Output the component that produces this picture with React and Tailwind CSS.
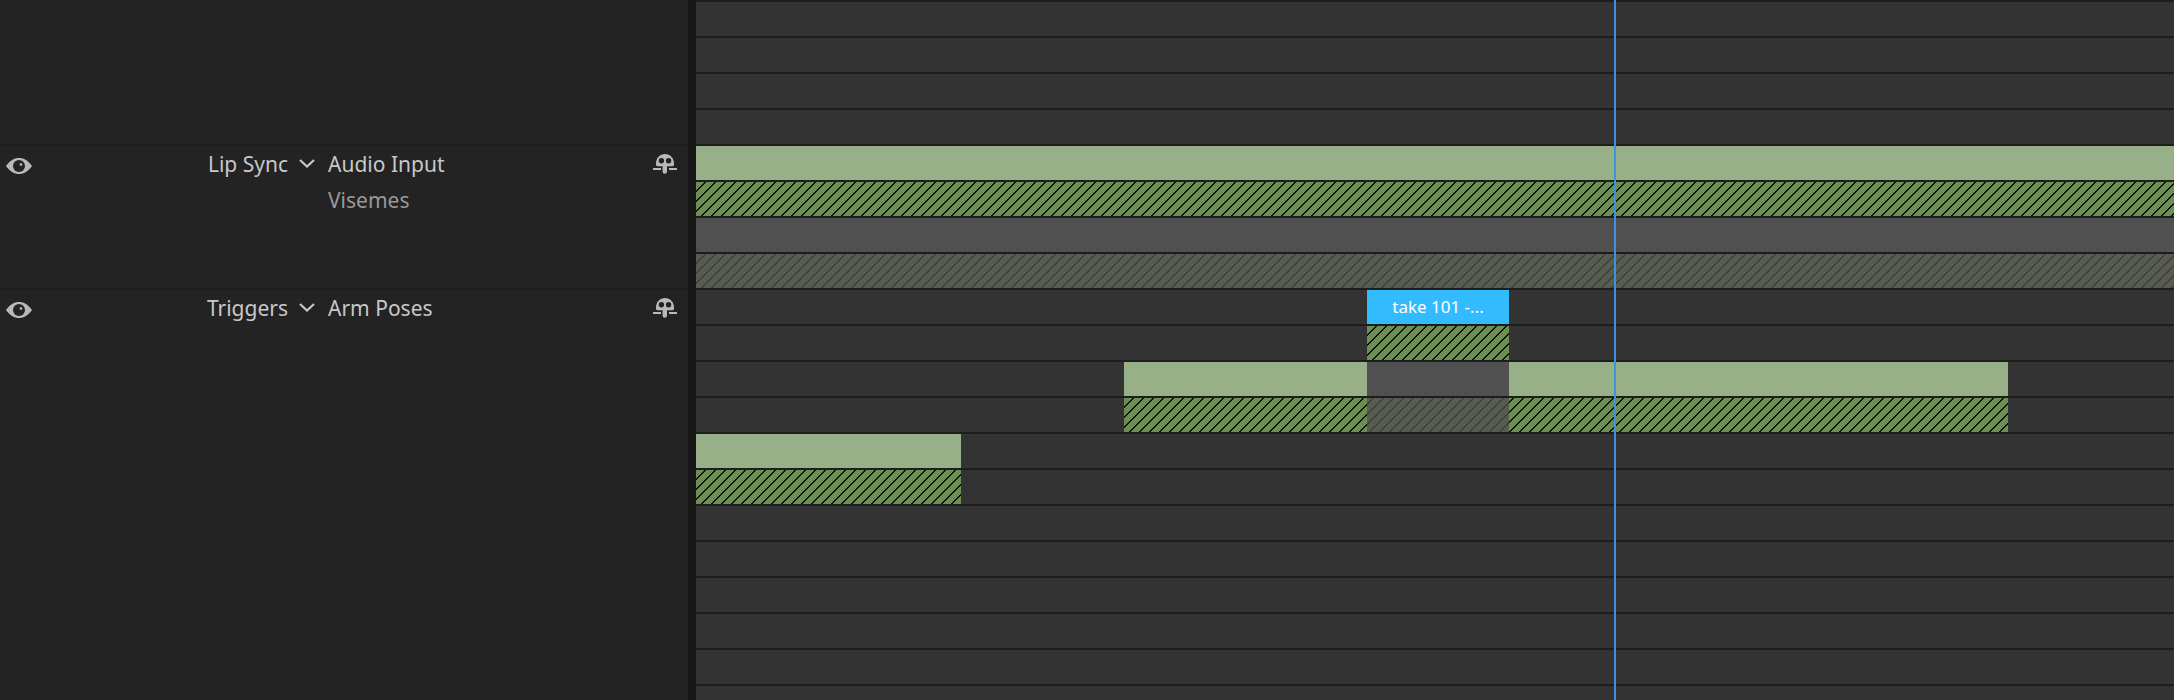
const ROW_COUNT = 20;

// Fill styles for each kind of clip
const clipStyles = {
  take: "bg-[#97b088]",
  blend:
    "bg-[#6b8f52] bg-[image:linear-gradient(135deg,#0d120a_5%,transparent_5%,transparent_45%,#0d120a_45%,#0d120a_55%,transparent_55%,transparent_95%,#0d120a_95%)] bg-size-[10px_10px]",
  muted: "bg-[#505050]",
  mutedBlend:
    "bg-[#585c50] bg-[image:linear-gradient(135deg,#3e413a_5%,transparent_5%,transparent_45%,#3e413a_45%,#3e413a_55%,transparent_55%,transparent_95%,#3e413a_95%)] bg-size-[10px_10px]",
  selected: "bg-[#33bbff]",
};

// row index -> clips in order, "gap" is the empty time before the clip,
// "phase" keeps the hatching continuous across neighbours
const clips = {
  4: [{ type: "take" }],
  5: [{ type: "blend" }],
  6: [{ type: "muted" }],
  7: [{ type: "mutedBlend" }],
  8: [{ type: "selected", gap: 671, length: 142, label: "take 101 -..." }],
  9: [{ type: "blend", gap: 671, length: 142 }],
  10: [
    { type: "take", gap: 428, length: 243 },
    { type: "muted", length: 142 },
    { type: "take", length: 499 },
  ],
  11: [
    { type: "blend", gap: 428, length: 243 },
    { type: "mutedBlend", length: 142, phase: 243 },
    { type: "blend", length: 499, phase: 385 },
  ],
  12: [{ type: "take", length: 265 }],
  13: [{ type: "blend", length: 265 }],
};

const behaviors = [
  { name: "Lip Sync", params: ["Audio Input", "Visemes"] },
  { name: "Triggers", params: ["Arm Poses"] },
];

const EyeIcon = () => (
  <svg viewBox="0 0 26 16" className="w-[26px] h-4" aria-hidden="true">
    <path d="M0 8C4 2.500 8 0 13 0s9 2.500 13 8c-4 5.500-8 8-13 8S4 13.500 0 8Z" fill="#b9b9b9" />
    <circle cx="13" cy="8" r="6" fill="#232323" />
    <circle cx="15" cy="6.500" r="1.300" fill="#c4c4c4" />
  </svg>
);

const PuppetIcon = () => (
  <svg viewBox="0 0 24 20" className="w-6 h-5" aria-hidden="true">
    <path
      d="M4.500 12.300C3.500 12.300 3 11.500 3 9.500 3 4 7 0 12 0s9 4 9 9.500c0 2-.5 2.800-1.500 2.800H14V17.500a2.200 2.200 0 0 1-4.400 0v-5.200Z"
      fill="#b9b9b9"
    />
    <circle cx="8.400" cy="6.700" r="2.700" fill="#232323" />
    <circle cx="15.600" cy="6.700" r="2.700" fill="#232323" />
    <path d="M0 14h8v2H0ZM16 14h8v2h-8Z" fill="#b9b9b9" />
  </svg>
);

const ChevronIcon = () => (
  <svg viewBox="0 0 16 9" className="w-4 h-[9px]" fill="none" aria-hidden="true">
    <path d="M1 1l7 6.500L15 1" stroke="#c8c8c8" strokeWidth="2.200" />
  </svg>
);

const Clip = ({ type, gap = 0, length, phase = 0, label }) => (
  <div
    className={`h-full flex items-center justify-center ${clipStyles[type]}`}
    style={{
      marginLeft: gap,
      width: length ?? "100%",
      backgroundPositionX: -phase,
    }}
  >
    {label && <span className="whitespace-nowrap text-[17px] text-white">{label}</span>}
  </div>
);

const Behavior = ({ name, params }) => (
  <section className="h-36 border-t-2 border-[#1f1f1f] flex text-[21px] leading-9 text-[#c8c8c8]">
    <button className="w-16 h-10 pl-1.5 flex items-center" aria-label={`Toggle ${name}`}>
      <EyeIcon />
    </button>
    <h2 className="w-56 text-right">{name}</h2>
    <button
      className="w-10 h-[34px] pr-0.5 flex items-center justify-center"
      aria-label={`Expand ${name}`}
    >
      <ChevronIcon />
    </button>
    <ul className="flex-1">
      {params.map((param, i) => (
        <li key={param} className={i > 0 ? "text-[#999999]" : ""}>
          {param}
        </li>
      ))}
    </ul>
    <button className="h-9 pr-[11px] flex items-center" aria-label={`Arm ${name}`}>
      <PuppetIcon />
    </button>
  </section>
);

export default function App() {
  return (
    <div className="h-screen flex overflow-hidden bg-[#232323] font-['Noto_Sans',sans-serif]">
      {/* BEHAVIORS */}
      <aside className="w-[688px] shrink-0 pt-36">
        {behaviors.map((behavior) => (
          <Behavior key={behavior.name} {...behavior} />
        ))}
      </aside>

      <div className="w-2 shrink-0 bg-[#171717]" />

      {/* TIMELINE */}
      <main className="relative flex-1 min-w-0 overflow-hidden bg-[#333333]">
        {Array.from({ length: ROW_COUNT }, (_, row) => (
          <div key={row} className="h-9 border-t-2 border-[#1d1d1d] flex">
            {(clips[row] || []).map((clip, i) => (
              <Clip key={i} {...clip} />
            ))}
          </div>
        ))}

        {/* PLAYHEAD */}
        <div className="absolute inset-y-0 left-[918px] w-0.5 bg-[#3a92e0]" />
      </main>
    </div>
  );
}
